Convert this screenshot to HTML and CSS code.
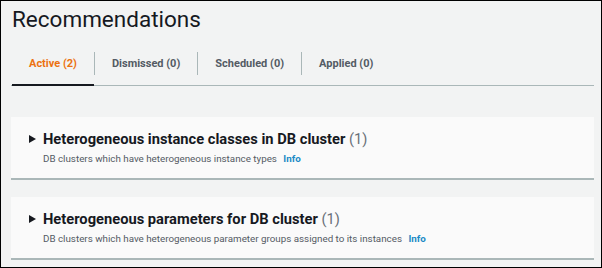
FILE: index.html
```html
<!DOCTYPE html>
<html lang="en">
<head>
  <meta charset="UTF-8">
  <title>Recommendations</title>
  <link rel="stylesheet" href="styles.css">
</head>
<body>

  <div class="page">
    <h1>Recommendations</h1>

    <div class="tabs">
      <div class="tab active"><span>Active (2)</span></div>
      <div class="tab"><span>Dismissed (0)</span></div>
      <div class="tab"><span>Scheduled (0)</span></div>
      <div class="tab"><span>Applied (0)</span></div>
    </div>

    <div class="cards">
      <div class="card">
        <div class="card-title">
          <span class="caret"></span>
          <h2>Heterogeneous instance classes in DB cluster <span class="count">(1)</span></h2>
        </div>
        <p class="card-desc">DB clusters which have heterogeneous instance types <a href="#" class="info">Info</a></p>
      </div>

      <div class="card">
        <div class="card-title">
          <span class="caret"></span>
          <h2>Heterogeneous parameters for DB cluster <span class="count">(1)</span></h2>
        </div>
        <p class="card-desc">DB clusters which have heterogeneous parameter groups assigned to its instances <a href="#" class="info">Info</a></p>
      </div>
    </div>
  </div>

</body>
</html>
```

FILE: styles.css
```css
* {
  box-sizing: border-box;
}

body {
  margin: 0;
  font-family: Roboto, sans-serif;
  color: #16191f;
}

.page {
  height: 268px;
  background-color: #f2f3f3;
  border: 1px solid #000;
  padding: 0 7px 0 10px;
}

h1 {
  margin: 0;
  padding: 3px 0 0 1px;
  font-size: 22.5px;
  font-weight: 400;
  line-height: 30px;
}

/* Tabs */
.tabs {
  display: flex;
  margin-top: 13px;
  border-bottom: 1px solid #aab7b8;
}

.tab {
  display: flex;
  align-items: center;
  height: 38px;
  padding-bottom: 6px;
  position: relative;
  font-size: 11px;
  font-weight: 700;
  color: #545b64;
}

.tab span {
  padding: 0 17px;
  border-left: 1px solid #aab7b8;
  line-height: 23px;
}

.tab:first-child {
  margin-left: 1px;
}

.tab:first-child span {
  border-left: none;
}

.tab.active {
  color: #ec7211;
}

.tab.active::after {
  content: "";
  position: absolute;
  left: 0;
  right: 0;
  bottom: -1px;
  height: 2px;
  background-color: #16191f;
}

/* Cards */
.cards {
  display: flex;
  flex-direction: column;
  gap: 17px;
  margin-top: 31px;
}

.card {
  background-color: #fafafa;
  border-bottom: 2px solid #aab7b8;
  height: 63px;
  padding: 12px 18px 0;
}

.card-title {
  display: flex;
  align-items: center;
}

.caret {
  width: 0;
  height: 0;
  border-top: 4px solid transparent;
  border-bottom: 4px solid transparent;
  border-left: 7px solid #16191f;
  margin-right: 7px;
}

h2 {
  margin: 0;
  font-size: 14.7px;
  font-weight: 700;
  line-height: 20px;
}

.count {
  font-weight: 400;
  color: #687078;
}

.card-desc {
  margin: 0 0 0 14px;
  font-size: 9.8px;
  line-height: 20px;
  color: #545b64;
}

.info {
  margin-left: 4px;
  color: #1a8ac6;
  font-weight: 700;
  text-decoration: none;
}
```
